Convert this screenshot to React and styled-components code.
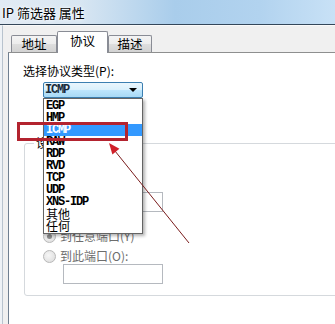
import React from 'react';
import styled, { createGlobalStyle } from 'styled-components';

const Global = createGlobalStyle`
  html, body { margin: 0; padding: 0; background: #f0f0f0; overflow: hidden; }
  body { font-family: "Noto Sans CJK SC", "Noto Sans", sans-serif; }
`;

const Window = styled.div`
  position: relative;
  width: 335px;
  height: 324px;
  display: flex;
  flex-direction: column;
  background: #eef2f6;
  overflow: hidden;
`;

const TitleBar = styled.div`
  flex: none;
  height: 24px;
  border-bottom: 1px solid #34475a;
  background: linear-gradient(to right, #e2ebf4 0px, #d8e6f2 80px, #a9cdeb 175px, #b2d3ef 260px, #c8e1f6 335px);
  display: flex;
  align-items: center;
  padding-left: 2px;
  font-size: 13px;
  color: #000;
  text-shadow: 0 0 5px #fff, 0 0 2px #fff;
`;

const Body = styled.div`
  flex: 1;
  min-width: 0;
  display: flex;
  flex-direction: column;
  margin-left: 2px;
  border-left: 1px solid #b8c3ce;
  padding-left: 5px;
  background: #f0f0f0;
  border-top: 1px solid #fafafa;
`;

const TabStrip = styled.div`
  flex: none;
  height: 26px;
  display: flex;
  align-items: flex-end;
  padding-left: 3px;
`;

const Tab = styled.div`
  box-sizing: border-box;
  width: ${p => p.$w}px;
  height: ${p => (p.$active ? 22 : 17)}px;
  border: 1px solid #898c95;
  border-bottom: none;
  border-radius: 2px 2px 0 0;
  background: ${p => (p.$active ? '#fff' : 'linear-gradient(#f4f4f4, #ececec 50%, #dedede 50%, #d2d2d2)')};
  margin-bottom: ${p => (p.$active ? -1 : 0)}px;
  position: relative;
  z-index: ${p => (p.$active ? 2 : 1)};
  display: flex;
  justify-content: center;
  align-items: ${p => (p.$active ? 'flex-start' : 'center')};
  padding-top: ${p => (p.$active ? 2 : 0)}px;
  font-size: 12.5px;
  line-height: 14px;
  color: #000;
`;

const Panel = styled.div`
  flex: 1;
  min-width: 0;
  overflow: hidden;
  background: #fff;
  border-left: 1px solid #6f7f90;
  border-top: 1px solid #8e8f8f;
  display: flex;
  flex-direction: column;
  align-items: flex-start;
  padding: 11px 0 0 14px;
`;

const Label = styled.div`
  font-size: 12px;
  line-height: 14px;
  color: #000;
`;

const SelectWrap = styled.div`
  position: relative;
  margin: 4px 0 0 20px;
  width: 100px;
  z-index: 5;
`;

const Select = styled.div`
  box-sizing: border-box;
  height: 16px;
  border: 1px solid #3c7fb1;
  border-radius: 2px;
  background: linear-gradient(#eaf6fd, #d9f0fc 50%, #bee6fd 50%, #a7d9f5);
  display: flex;
  align-items: center;
  justify-content: space-between;
  padding: 0 5px 0 1px;
`;

const Arrow = styled.span`
  width: 0;
  height: 0;
  border-left: 4px solid transparent;
  border-right: 4px solid transparent;
  border-top: 4px solid #000;
`;

const MonoText = styled.span`
  font-family: "Liberation Mono", "DejaVu Sans Mono", monospace;
  font-weight: bold;
  font-size: 12px;
  letter-spacing: -1.2px;
  line-height: 12px;
  color: #1a2a3a;
`;

const List = styled.div`
  position: absolute;
  top: 100%;
  left: 0;
  box-sizing: border-box;
  width: 100px;
  background: #fff;
  border: 1px solid #646464;
  padding: 1px 0;
  box-shadow: 2px 2px 3px rgba(0, 0, 0, 0.3);
  display: flex;
  flex-direction: column;
`;

const Item = styled.div`
  height: 12px;
  line-height: 12px;
  padding-left: 2px;
  color: ${p => (p.$sel ? '#fff' : '#000')};
  background: ${p => (p.$sel ? '#3399ff' : 'transparent')};
  font-family: ${p => (p.$cjk ? '"Noto Sans CJK SC", sans-serif' : '"Liberation Mono", "DejaVu Sans Mono", monospace')};
  font-weight: ${p => (p.$cjk ? 'normal' : 'bold')};
  font-size: 12px;
  letter-spacing: ${p => (p.$cjk ? 0 : -1.2)}px;
  white-space: nowrap;
`;

const Group = styled.div`
  position: relative;
  flex: none;
  margin: 45px 0 0 1px;
  width: 340px;
  box-sizing: border-box;
  border: 1px solid #d5d9dd;
  border-radius: 3px;
  padding: 14px 0 11px 18px;
  display: flex;
  flex-direction: column;
  align-items: flex-start;
`;

const Legend = styled.span`
  position: absolute;
  top: -8px;
  left: 9px;
  padding: 0 2px;
  background: #fff;
  font-size: 12px;
  line-height: 14px;
  color: #000;
`;

const RadioRow = styled.div`
  display: flex;
  align-items: center;
  gap: 4px;
  height: 12px;
  margin-top: ${p => p.$mt || 0}px;
  font-size: 12px;
  line-height: 12px;
  color: #6d6d6d;
`;

const Radio = styled.span`
  box-sizing: border-box;
  width: 13px;
  height: 13px;
  border-radius: 50%;
  border: 1px solid #b8b8b8;
  background: radial-gradient(circle at 40% 40%, #f6f6f6, #dadada);
  display: flex;
  align-items: center;
  justify-content: center;
  &::after {
    content: '';
    width: 5px;
    height: 5px;
    border-radius: 50%;
    background: ${p => (p.$on ? '#8d8d8d' : 'transparent')};
  }
`;

const TextBox = styled.div`
  box-sizing: border-box;
  width: 100px;
  height: 20px;
  margin: 2px 0 0 20px;
  border: 1px solid #b5b9bf;
  background: #fff;
`;

const Callout = styled.div`
  position: absolute;
  left: 17px;
  top: 122px;
  width: 111px;
  height: 19px;
  box-sizing: border-box;
  border: 3px solid #b3232f;
  z-index: 10;
`;

const Overlay = styled.svg`
  position: absolute;
  left: 0;
  top: 0;
  z-index: 10;
  pointer-events: none;
`;

const items = ['EGP', 'HMP', 'ICMP', 'RAW', 'RDP', 'RVD', 'TCP', 'UDP', 'XNS-IDP', '其他', '任何'];

export default function App() {
  return (
    <>
      <Global />
      <Window>
        <TitleBar>IP 筛选器 属性</TitleBar>
        <Body>
          <TabStrip>
            <Tab $w={46}>地址</Tab>
            <Tab $w={51} $active>协议</Tab>
            <Tab $w={44}>描述</Tab>
          </TabStrip>
          <Panel>
            <Label>选择协议类型(P):</Label>
            <SelectWrap>
              <Select>
                <MonoText>ICMP</MonoText>
                <Arrow />
              </Select>
              <List>
                {items.map(t => (
                  <Item key={t} $sel={t === 'ICMP'} $cjk={/[^\x00-\x7f]/.test(t)}>{t}</Item>
                ))}
              </List>
            </SelectWrap>
            <Group>
              <Legend>设置协议端口:</Legend>
              <RadioRow><Radio $on />从任意端口(F)</RadioRow>
              <RadioRow $mt={8}><Radio />从此端口(R):</RadioRow>
              <TextBox />
              <RadioRow $mt={18}><Radio $on />到任意端口(Y)</RadioRow>
              <RadioRow $mt={8}><Radio />到此端口(O):</RadioRow>
              <TextBox />
            </Group>
          </Panel>
        </Body>
        <Callout />
        <Overlay width="335" height="324" viewBox="0 0 335 324">
          <line x1="189" y1="243" x2="115" y2="151" stroke="#7a1c1c" strokeWidth="1" />
          <polygon points="109,143 112.4,154.4 119.4,148.8" fill="#d0202a" />
        </Overlay>
      </Window>
    </>
  );
}
